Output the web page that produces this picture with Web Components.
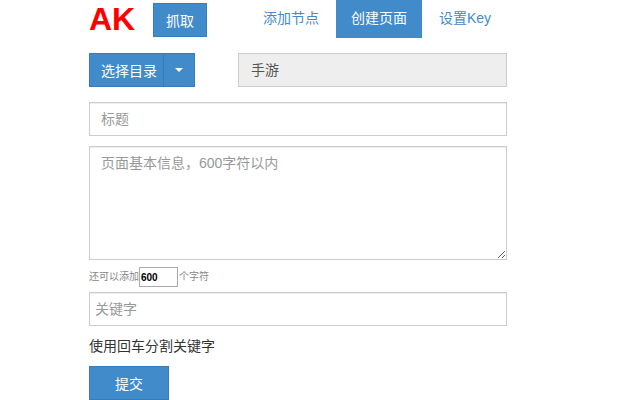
<!DOCTYPE html>
<html lang="zh">
<head>
<meta charset="utf-8">
<title>AK</title>
<style>
html, body { margin: 0; background: #fff; }
body { font-family: "Liberation Sans", "Noto Sans CJK SC", sans-serif; overflow: hidden; }
</style>
</head>
<body>
<ak-page>
    <ak-header slot="header"></ak-header>
    <ak-select-row folder="手游"></ak-select-row>
    <ak-field placeholder="标题"></ak-field>
    <ak-field placeholder="页面基本信息，600字符以内" multiline></ak-field>
    <ak-counter value="600"></ak-counter>
    <ak-field placeholder="关键字" tight></ak-field>
    <ak-hint>使用回车分割关键字</ak-hint>
    <ak-button wide>提交</ak-button>
</ak-page>

<script>
const FONT = '"Liberation Sans", "Noto Sans CJK SC", sans-serif';

class AkPage extends HTMLElement {
    constructor() {
        super();
        this.attachShadow({ mode: 'open' });
        this.shadowRoot.innerHTML = `
            <style>
                :host {
                    display: block;
                    width: 418px;
                    margin-left: 89px;
                    font-family: ${FONT};
                }
                .form {
                    display: flex;
                    flex-direction: column;
                    align-items: stretch;
                }
            </style>
            <slot name="header"></slot>
            <div class="form"><slot></slot></div>
        `;
    }
}

class AkButton extends HTMLElement {
    constructor() {
        super();
        this.attachShadow({ mode: 'open' });
        this.shadowRoot.innerHTML = `
            <style>
                :host {
                    display: flex;
                    flex: none;
                    box-sizing: border-box;
                    width: 54px;
                    height: 34px;
                    align-items: center;
                    justify-content: center;
                    background: #428bca;
                    border: 1px solid #357ebd;
                    color: #fff;
                    font-size: 14px;
                    cursor: pointer;
                }
                :host([wide]) { width: 80px; }
            </style>
            <slot></slot>
        `;
    }
}

class AkHeader extends HTMLElement {
    constructor() {
        super();
        this.attachShadow({ mode: 'open' });
        this.shadowRoot.innerHTML = `
            <style>
                :host {
                    display: flex;
                    height: 53px;
                    align-items: flex-start;
                    color: #428bca;
                    font-size: 14px;
                }
                .logo {
                    flex: none;
                    width: 64px;
                    height: 38px;
                    line-height: 38px;
                    color: #f00;
                    font-size: 32px;
                    font-weight: bold;
                }
                ak-button { margin-top: 3px; }
                nav { display: flex; gap: 2px; margin-left: 41px; }
                a {
                    display: block;
                    height: 38px;
                    line-height: 37px;
                    padding: 0 15px;
                    white-space: nowrap;
                    color: #428bca;
                }
                a.active { background: #428bca; color: #fff; }
            </style>
            <div class="logo">AK</div>
            <ak-button>抓取</ak-button>
            <nav>
                <a>添加节点</a>
                <a class="active">创建页面</a>
                <a>设置Key</a>
            </nav>
        `;
    }
}

class AkSelectRow extends HTMLElement {
    constructor() {
        super();
        this.attachShadow({ mode: 'open' });
        const folder = this.getAttribute('folder') || '';
        this.shadowRoot.innerHTML = `
            <style>
                :host {
                    display: flex;
                    height: 34px;
                    margin-bottom: 15px;
                    justify-content: space-between;
                    font-size: 14px;
                }
                .group { display: flex; color: #fff; }
                .part {
                    box-sizing: border-box;
                    height: 34px;
                    display: flex;
                    align-items: center;
                    justify-content: center;
                    background: #428bca;
                    border: 1px solid #357ebd;
                }
                .label { width: 75px; padding-left: 11px; justify-content: flex-start; }
                .toggle { width: 32px; margin-left: -1px; }
                .caret {
                    width: 0;
                    height: 0;
                    border-top: 4px solid #fff;
                    border-left: 4px solid transparent;
                    border-right: 4px solid transparent;
                }
                .current {
                    box-sizing: border-box;
                    width: 269px;
                    height: 34px;
                    line-height: 32px;
                    padding: 0 12px;
                    background: #eee;
                    border: 1px solid #ccc;
                    color: #555;
                }
            </style>
            <div class="group">
                <div class="part label">选择目录</div>
                <div class="part toggle"><span class="caret"></span></div>
            </div>
            <div class="current">${folder}</div>
        `;
    }
}

class AkField extends HTMLElement {
    constructor() {
        super();
        this.attachShadow({ mode: 'open' });
        const placeholder = this.getAttribute('placeholder') || '';
        const control = this.hasAttribute('multiline')
            ? `<textarea placeholder="${placeholder}"></textarea>`
            : `<input type="text" placeholder="${placeholder}">`;
        this.shadowRoot.innerHTML = `
            <style>
                :host {
                    display: block;
                    margin-bottom: 10px;
                }
                :host([multiline]) { margin-bottom: 7px; }
                :host([tight]) { margin-bottom: 0; }
                input, textarea {
                    display: block;
                    box-sizing: border-box;
                    width: 100%;
                    height: 34px;
                    margin: 0;
                    padding: 6px 11px;
                    background: #fff;
                    border: 1px solid #ccc;
                    border-radius: 0;
                    outline: none;
                    box-shadow: inset 0 1px 1px rgba(0,0,0,0.075);
                    color: #555;
                    font-family: ${FONT};
                    font-size: 14px;
                    line-height: 20px;
                }
                textarea { height: 114px; }
                :host([tight]) input { padding: 6px 5px; }
                ::placeholder { color: #999; opacity: 1; }
            </style>
            ${control}
        `;
    }
}

class AkCounter extends HTMLElement {
    constructor() {
        super();
        this.attachShadow({ mode: 'open' });
        const value = this.getAttribute('value') || '';
        this.shadowRoot.innerHTML = `
            <style>
                :host {
                    display: flex;
                    height: 25px;
                    align-items: flex-start;
                    color: #888;
                    font-size: 10px;
                    line-height: 20px;
                }
                input {
                    box-sizing: border-box;
                    width: 39px;
                    height: 20px;
                    margin: 0 1px 0 0;
                    padding: 0 1px;
                    border: 1px solid #aaa;
                    border-radius: 0;
                    outline: none;
                    color: #000;
                    font-family: ${FONT};
                    font-size: 10px;
                    font-weight: bold;
                }
            </style>
            <span>还可以添加</span>
            <input type="text" value="${value}">
            <span>个字符</span>
        `;
    }
}

class AkHint extends HTMLElement {
    constructor() {
        super();
        this.attachShadow({ mode: 'open' });
        this.shadowRoot.innerHTML = `
            <style>
                :host {
                    display: block;
                    height: 40px;
                    padding-top: 10px;
                    box-sizing: border-box;
                    color: #333;
                    font-size: 14px;
                    line-height: 20px;
                }
            </style>
            <slot></slot>
        `;
    }
}

customElements.define('ak-button', AkButton);
customElements.define('ak-header', AkHeader);
customElements.define('ak-select-row', AkSelectRow);
customElements.define('ak-field', AkField);
customElements.define('ak-counter', AkCounter);
customElements.define('ak-hint', AkHint);
customElements.define('ak-page', AkPage);
</script>
</body>
</html>
